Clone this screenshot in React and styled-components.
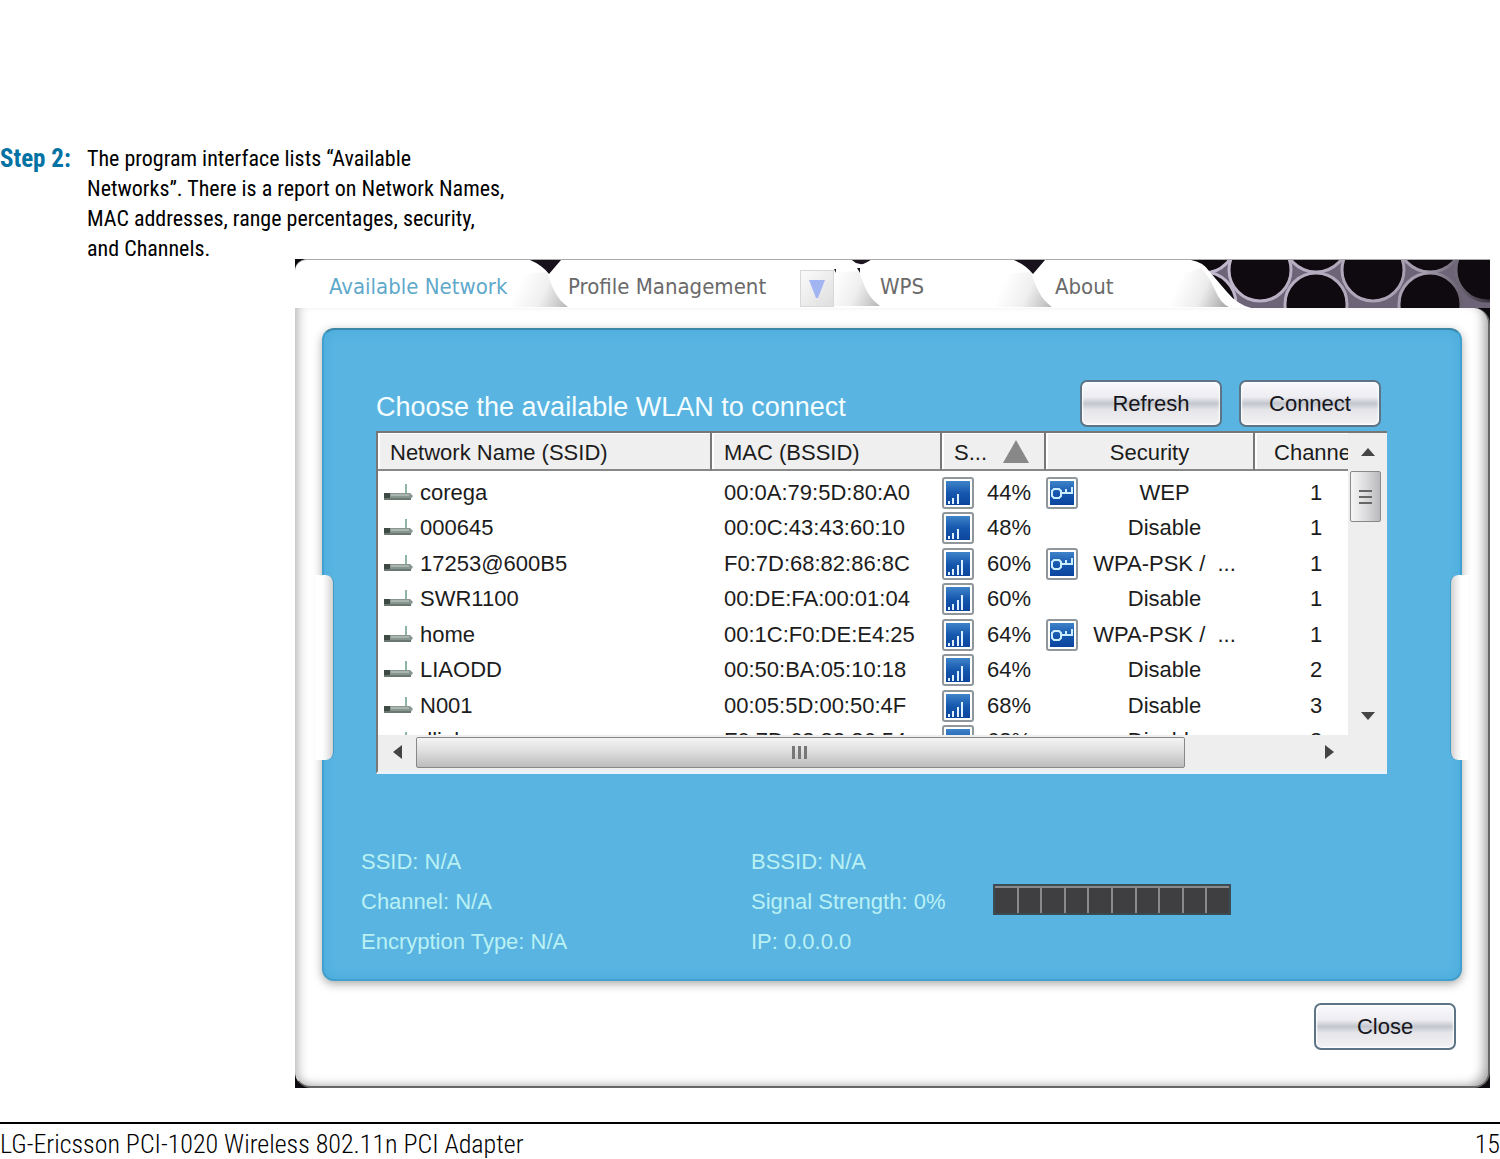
import React from "react";
import styled, { createGlobalStyle } from "styled-components";


const GlobalStyle = createGlobalStyle`
    *{
        box-sizing: border-box;
    }
    body{
        margin: 0;
        background: #fff;
        color: #000;
        font-family: "Liberation Sans", Arial, sans-serif;
    }
    button{
        font: inherit;
        color: inherit;
        padding: 0;
        border: none;
        background: none;
    }
`;

const Page = styled.div`
    display: flex;
    flex-direction: column;
    font-family: "Roboto Condensed", "Liberation Sans", sans-serif;
`;

const Step = styled.section`
    display: flex;
    padding-top: 144px;
    font-size: 22px;
    line-height: 30px;
    h2{
        width: 87px;
        margin: 0;
        font-size: 25px;
        line-height: 30px;
        color: #0072a3;
    }
    p{
        margin: 0;
    }
`;

const PageFooter = styled.footer`
    display: flex;
    justify-content: space-between;
    margin-top: 34px;
    padding-top: 6px;
    border-top: 2px solid #000;
    font-size: 26px;
    font-weight: 300;
    line-height: 29px;
`;

/* the program window */
const Window = styled.main`
    margin: -5px 10px 0 295px;
    background: #0d0b10;
    font-family: "Liberation Sans", Arial, sans-serif;
    font-size: 22px;
`;

const TabBar = styled.nav`
    display: flex;
    height: 49px;
    border-top: 1px solid #aaa;
    border-top-left-radius: 12px;
    background: #fff;
    overflow: hidden;
`;

const Tab = styled.div`
    display: flex;
    flex: none;
    justify-content: space-between;
    width: ${(props) => props.$width}px;
    padding-left: ${(props) => props.$indent || 0}px;
    > button{
        height: 52px;
        font-family: "DejaVu Sans Condensed", "DejaVu Sans", sans-serif;
        font-size: 22px;
        color: ${(props) => (props.$active ? "#5fa9cb" : "#6a6a6a")};
        white-space: nowrap;
    }
`;

const DropArea = styled.div`
    display: flex;
    align-items: flex-end;
`;

const DropButton = styled.button`
    display: flex;
    align-items: center;
    justify-content: center;
    width: 34px;
    height: 37px;
    margin-bottom: 1px;
    border: 1px solid #d8d8d4;
    background: linear-gradient(135deg, #fbfbfb, #dedede);
`;

const Comb = styled.svg`
    flex: 1;
    min-width: 0;
    height: 49px;
`;

const Body = styled.div`
    padding: 20px 26px 36px 26px;
    border: solid #666;
    border-width: 0 2px 2px 0;
    border-left: 1px solid #ccc;
    border-radius: 0 16px 16px 16px;
    background: #fff;
    box-shadow: inset -9px -5px 12px -6px #999, inset 9px 0 12px -8px #aaa;
`;

const Panel = styled.section`
    position: relative;
    padding: 50px 73px 17px 37px;
    border: 2px solid #419fcd;
    border-top-color: #3b87a6;
    border-radius: 12px;
    background: #59b4e1;
    box-shadow: 0 3px 10px #aaa, inset 0 0 12px #46aadb;
`;

/* white grips cut in both sides of the panel */
const Notch = styled.span`
    position: absolute;
    top: 245px;
    ${(props) => props.$side}: -9px;
    width: 19px;
    height: 185px;
    background: linear-gradient(
        ${(props) => (props.$side === "left" ? "90deg" : "270deg")},
        #fff 40%, #f0f0f0 65%, #d2d2d2
    );
    border: solid #3f9cc9;
    border-width: ${(props) => (props.$side === "left" ? "0 1px 0 0" : "0 0 0 1px")};
    border-radius: ${(props) => (props.$side === "left" ? "0 8px 8px 0" : "8px 0 0 8px")};
`;

const Toolbar = styled.div`
    display: flex;
    align-items: center;
    gap: 17px;
    padding: 0 6px 4px 15px;
    h1{
        flex: 1;
        margin: 0;
        padding-top: 8px;
        font-size: 27px;
        font-weight: normal;
        line-height: 39px;
        color: #f4fdff;
    }
`;

const PushButton = styled.button`
    width: 142px;
    height: 47px;
    border: 2px solid #5d7486;
    border-radius: 7px;
    background: linear-gradient(#fafafc, #ededf2 35%, #c3c6cd 50%, #e6e6ea 65%, #f2f2f4);
    box-shadow: inset 0 0 2px 1px #fff;
    color: #16161c;
`;

const List = styled.div`
    display: grid;
    grid-template-columns: minmax(0, 1fr) 39px;
    grid-template-rows: 302px 36px;
    margin-left: 15px;
    border: solid #777;
    border-width: 2px 0 0 2px;
    border-bottom: 3px solid #e8f4f8;
    background: #eee;
`;

const Viewport = styled.div`
    overflow: hidden;
    background: #fff;
`;

const Table = styled.table`
    width: calc(100% + 29px);
    table-layout: fixed;
    border-collapse: separate;
    border-spacing: 0;
    color: #1c1c1c;
    th, td{
        padding: 0;
        font-weight: normal;
        text-align: left;
        white-space: nowrap;
    }
    th{
        height: 38px;
        padding: 4px 12px 0 12px;
        border-right: 2px solid #777;
        border-bottom: 2px solid #888;
        background: #efefef;
        box-shadow: inset 2px 1px 0 #fff;
    }
    th.center{
        text-align: center;
    }
    tbody td{
        height: 35px;
    }
    tbody tr:nth-child(even) td{
        height: 36px;
    }
    tbody:before{
        content: "";
        display: block;
        height: 4px;
    }
    td.mac{
        padding-left: 12px;
    }
    td.channel{
        text-align: center;
    }
`;

const Sortable = styled.div`
    display: flex;
    gap: 16px;
    align-items: center;
    svg{
        margin-bottom: 4px;
    }
`;

const Cell = styled.div`
    display: flex;
    align-items: center;
    height: 35px;
    gap: ${(props) => props.$gap || 0}px;
    padding-left: ${(props) => props.$indent || 0}px;
`;

const Security = styled.div`
    display: grid;
    grid-template-columns: 32px 1fr;
    align-items: center;
    height: 35px;
    padding-right: 4px;
    text-align: center;
    white-space: pre;
`;

const ScrollV = styled.div`
    display: flex;
    flex-direction: column;
    align-items: center;
    > button{
        display: flex;
        align-items: center;
        justify-content: center;
        width: 34px;
        height: 38px;
    }
`;

const ThumbV = styled.div`
    display: flex;
    align-items: center;
    justify-content: center;
    width: 31px;
    height: 51px;
    margin-right: 4px;
    margin-bottom: auto;
    border: 1px solid #888;
    border-radius: 2px;
    background: linear-gradient(90deg, #f6f6f6, #dcdcde 50%, #b9b9bd);
`;

const ScrollH = styled.div`
    display: flex;
    align-items: center;
    height: 34px;
    > button{
        display: flex;
        align-items: center;
        justify-content: center;
        width: 38px;
        height: 32px;
    }
`;

const TrackH = styled.div`
    flex: 1;
    height: 31px;
`;

const ThumbH = styled.div`
    display: flex;
    align-items: center;
    justify-content: center;
    width: 86%;
    height: 31px;
    border: 1px solid #888;
    border-radius: 2px;
    background: linear-gradient(#f4f4f4, #dcdcdc 50%, #bcbcbc);
`;

const Status = styled.div`
    display: grid;
    grid-template-columns: 390px 242px 1fr;
    grid-auto-rows: 40px;
    align-items: center;
    margin-top: 68px;
    color: #b9f1f4;
`;

const Meter = styled.div`
    display: flex;
    gap: 2px;
    width: 238px;
    height: 31px;
    padding-top: 2px;
    border: 2px solid #3c4c54;
    background: #8a8a8a;
    margin-top: -6px;
    span{
        flex: 1;
        background: #3f3f41;
    }
`;

const WindowFooter = styled.div`
    display: flex;
    justify-content: flex-end;
    padding: 22px 6px 0 0;
`;


const networks = [
    { ssid: "corega", mac: "00:0A:79:5D:80:A0", signal: 44, security: "WEP", locked: true, channel: 1 },
    { ssid: "000645", mac: "00:0C:43:43:60:10", signal: 48, security: "Disable", channel: 1 },
    { ssid: "17253@600B5", mac: "F0:7D:68:82:86:8C", signal: 60, security: "WPA-PSK /  ...", locked: true, channel: 1 },
    { ssid: "SWR1100", mac: "00:DE:FA:00:01:04", signal: 60, security: "Disable", channel: 1 },
    { ssid: "home", mac: "00:1C:F0:DE:E4:25", signal: 64, security: "WPA-PSK /  ...", locked: true, channel: 1 },
    { ssid: "LIAODD", mac: "00:50:BA:05:10:18", signal: 64, security: "Disable", channel: 2 },
    { ssid: "N001", mac: "00:05:5D:00:50:4F", signal: 68, security: "Disable", channel: 3 },
    { ssid: "dlink", mac: "F0:7D:68:82:86:54", signal: 68, security: "Disable", channel: 3 },
];

const Fold = ({ id, width = 60, small }) => (
    <svg width={width} height="49" viewBox={`${60 - width} 0 ${width} 49`}>
        <defs>
            <linearGradient id={id} gradientUnits="userSpaceOnUse" x1="10" y1="26" x2="58" y2="48">
                <stop offset="0" stopColor="#fff" />
                <stop offset="0.5" stopColor="#efefef" />
                <stop offset="1" stopColor="#b8b8b8" />
            </linearGradient>
        </defs>
        <path d="M4 14 L39 12 C44 28 49 39 60 47 L0 47 Z" fill={`url(#${id})`} />
        {small
            ? <path d="M31 0 H52 Q44 6 40 5 Q34 4 31 0 M14 10 h2 v4 z M37 9 h3 v5 z" fill="#1d151f" />
            : <path d="M22 0 H53 L41 14 Q34 5 22 0" fill="#17121c" />}
    </svg>
);

const Arrow = ({ d, width = 14, height = 14, fill = "#444" }) => (
    <svg width={width} height={height} viewBox={`0 0 ${width} ${height}`}>
        <path d={d} fill={fill} />
    </svg>
);

const RouterIcon = () => (
    <svg width="30" height="18" viewBox="0 0 30 18">
        <path d="M22 0 V11" stroke="#8fb5a6" strokeWidth="2" />
        <path d="M0 9 H26 L29 12 L26 16 H0 Z" fill="#87968e" />
        <path d="M7 11 H25" stroke="#a9b5ae" strokeWidth="2" />
        <path d="M0 9 H6 V16 H0 Z" fill="#3f4a45" />
        <path d="M0 15 H27" stroke="#6b7871" strokeWidth="2" />
    </svg>
);

const Badge = ({ children }) => (
    <svg width="32" height="32" viewBox="0 0 32 32">
        <defs>
            <linearGradient id="badge" x1="0" y1="0" x2="0" y2="1">
                <stop offset="0" stopColor="#3f83c9" />
                <stop offset="0.5" stopColor="#1658ae" />
                <stop offset="1" stopColor="#0b449e" />
            </linearGradient>
        </defs>
        <rect x="1" y="1" width="30" height="30" rx="2" fill="#fff" stroke="#8f979c" strokeWidth="2" />
        <rect x="4" y="4" width="24" height="24" fill="url(#badge)" />
        {children}
    </svg>
);

const SignalIcon = ({ signal }) => (
    <Badge>
        <path d="M7 24 v3 M11 21 v6 M16 17 v10" stroke="#dff1ff" strokeWidth="2" />
        {signal >= 60 && <path d="M20 12 v15" stroke="#dff1ff" strokeWidth="2" />}
    </Badge>
);

const KeyIcon = () => (
    <Badge>
        <path d="M8 12 h5 l2 2 v5 l-2 2 h-5 l-2 -2 v-5 z M15 16 h11 v-6 M20 16 v-4" fill="none" stroke="#cdeeff" strokeWidth="2" />
    </Badge>
);

const Honeycomb = () => (
    <Comb viewBox="0 0 325 49" preserveAspectRatio="xMinYMin slice">
        <defs>
            <linearGradient id="combWall" gradientUnits="userSpaceOnUse" x1="0" y1="0" x2="325" y2="0">
                <stop offset="0" stopColor="#c9bfd6" />
                <stop offset="0.8" stopColor="#a59dae" />
                <stop offset="1" stopColor="#37323c" />
            </linearGradient>
            <linearGradient id="aboutFold" gradientUnits="userSpaceOnUse" x1="12" y1="26" x2="60" y2="48">
                <stop offset="0" stopColor="#fff" />
                <stop offset="0.5" stopColor="#ececec" />
                <stop offset="1" stopColor="#a8a8a8" />
            </linearGradient>
        </defs>
        <rect width="325" height="49" fill="#6d6478" />
        <g fill="#0e0a0f" stroke="url(#combWall)" strokeWidth="3">
            <circle cx="39" cy="-18" r="31" />
            <circle cx="39" cy="44" r="32" />
            <circle cx="151" cy="-20" r="32" />
            <circle cx="151" cy="44" r="31" />
            <circle cx="265" cy="-20" r="32" />
            <circle cx="265" cy="44" r="31" />
            <circle cx="95" cy="10" r="31" />
            <circle cx="208" cy="10" r="31" />
            <circle cx="322" cy="10" r="31" />
        </g>
        <path d="M0 0 H26 Q38 2 44 11 L62 32 Q74 47 92 49 H0 Z" fill="#fff" />
        <path d="M4 18 L36 8 Q44 16 50 30 T64 47 L0 47 Z" fill="url(#aboutFold)" />
    </Comb>
);


export default function App() {
    return (
        <>
            <GlobalStyle />
            <Page>
                <Step>
                    <h2>Step 2:</h2>
                    <p>
                        The program interface lists “Available<br />
                        Networks”. There is a report on Network Names,<br />
                        MAC addresses, range percentages, security,<br />
                        and Channels.
                    </p>
                </Step>

                <Window>
                    <TabBar>
                        <Tab $width={273} $indent={34} $active>
                            <button type="button">Available Network</button>
                            <Fold id="fold1" width={56} />
                        </Tab>
                        <Tab $width={312}>
                            <button type="button">Profile Management</button>
                            <DropArea>
                                <DropButton type="button" aria-label="Profiles">
                                    <Arrow d="M0 0 H16 L9 18 H7 Z" width={16} height={18} fill="#a3b4f3" />
                                </DropButton>
                                <Fold id="fold2" width={46} small />
                            </DropArea>
                        </Tab>
                        <Tab $width={172}>
                            <button type="button">WPS</button>
                            <Fold id="fold3" />
                        </Tab>
                        <Tab $width={113} $indent={3}>
                            <button type="button">About</button>
                        </Tab>
                        <Honeycomb />
                    </TabBar>

                    <Body>
                        <Panel>
                            <Notch $side="left" />
                            <Notch $side="right" />
                            <Toolbar>
                                <h1>Choose the available WLAN to connect</h1>
                                <PushButton type="button">Refresh</PushButton>
                                <PushButton type="button">Connect</PushButton>
                            </Toolbar>

                            <List>
                                <Viewport>
                                    <Table>
                                        <colgroup>
                                            <col />
                                            <col width="230" />
                                            <col width="104" />
                                            <col width="209" />
                                            <col width="122" />
                                        </colgroup>
                                        <thead>
                                            <tr>
                                                <th>Network Name (SSID)</th>
                                                <th>MAC (BSSID)</th>
                                                <th>
                                                    <Sortable>
                                                        S...
                                                        <Arrow d="M13 0 L26 23 H0 Z" width={26} height={23} fill="#888" />
                                                    </Sortable>
                                                </th>
                                                <th className="center">Security</th>
                                                <th className="center">Channel</th>
                                            </tr>
                                        </thead>
                                        <tbody>
                                            {networks.map((item) => (
                                                <tr key={item.mac}>
                                                    <td>
                                                        <Cell $indent={6} $gap={6}>
                                                            <RouterIcon />
                                                            {item.ssid}
                                                        </Cell>
                                                    </td>
                                                    <td className="mac">{item.mac}</td>
                                                    <td>
                                                        <Cell $gap={13}>
                                                            <SignalIcon signal={item.signal} />
                                                            {item.signal}%
                                                        </Cell>
                                                    </td>
                                                    <td>
                                                        <Security>
                                                            {item.locked ? <KeyIcon /> : <span />}
                                                            <span>{item.security}</span>
                                                        </Security>
                                                    </td>
                                                    <td className="channel">{item.channel}</td>
                                                </tr>
                                            ))}
                                        </tbody>
                                    </Table>
                                </Viewport>

                                <ScrollV>
                                    <button type="button" aria-label="Scroll up">
                                        <Arrow d="M7 0 L14 8 H0 Z" height={8} />
                                    </button>
                                    <ThumbV>
                                        <Arrow d="M0 1 h13 v2 h-13 z M0 7 h13 v2 h-13 z M0 13 h13 v2 h-13 z" height={16} fill="#666" />
                                    </ThumbV>
                                    <button type="button" aria-label="Scroll down">
                                        <Arrow d="M0 0 H14 L7 8 Z" height={8} />
                                    </button>
                                </ScrollV>

                                <ScrollH>
                                    <button type="button" aria-label="Scroll left">
                                        <Arrow d="M9 0 V14 L0 7 Z" width={9} />
                                    </button>
                                    <TrackH>
                                        <ThumbH>
                                            <Arrow d="M0 0 h3 v13 h-3 z M6 0 h3 v13 h-3 z M12 0 h3 v13 h-3 z" width={16} height={13} fill="#777" />
                                        </ThumbH>
                                    </TrackH>
                                    <button type="button" aria-label="Scroll right">
                                        <Arrow d="M0 0 V14 L9 7 Z" width={9} />
                                    </button>
                                </ScrollH>
                            </List>

                            <Status>
                                <span>SSID: N/A</span>
                                <span>BSSID: N/A</span>
                                <span />
                                <span>Channel: N/A</span>
                                <span>Signal Strength: 0%</span>
                                <Meter>
                                    {Array.from({ length: 10 }, (_, i) => <span key={i} />)}
                                </Meter>
                                <span>Encryption Type: N/A</span>
                                <span>IP: 0.0.0.0</span>
                            </Status>
                        </Panel>

                        <WindowFooter>
                            <PushButton type="button">Close</PushButton>
                        </WindowFooter>
                    </Body>
                </Window>

                <PageFooter>
                    <span>LG-Ericsson PCI-1020 Wireless 802.11n PCI Adapter</span>
                    <span>15</span>
                </PageFooter>
            </Page>
        </>
    );
}
